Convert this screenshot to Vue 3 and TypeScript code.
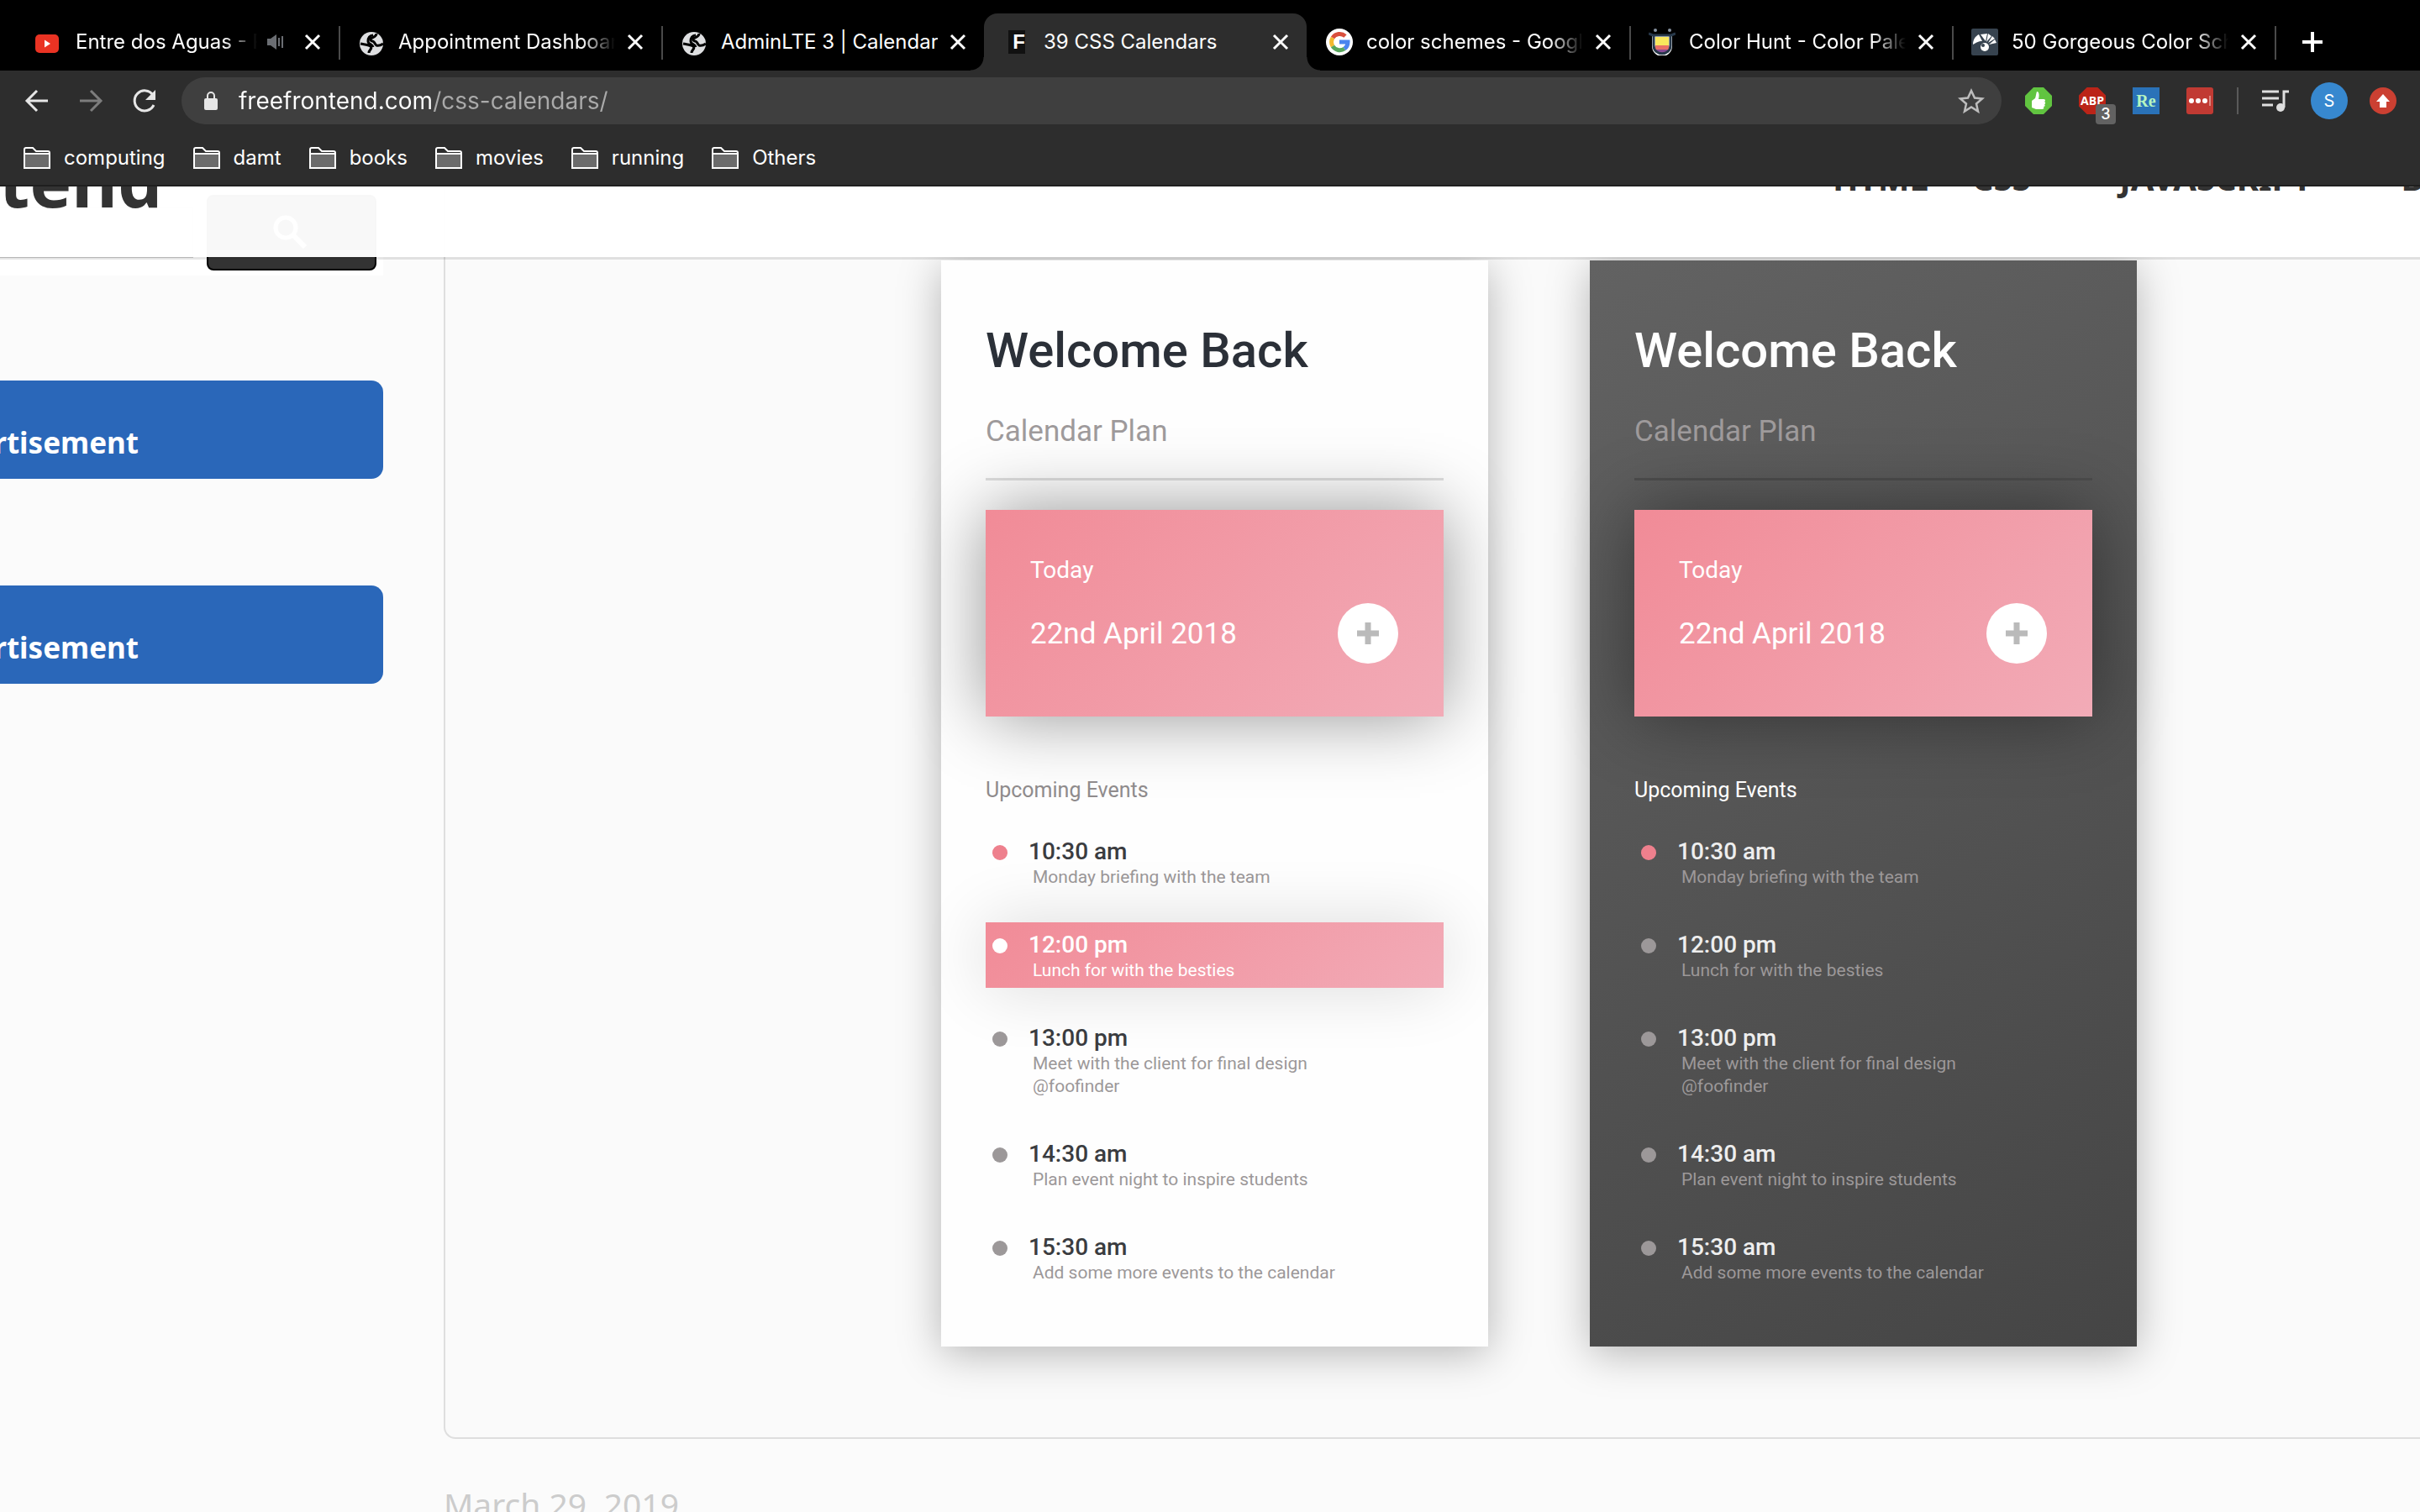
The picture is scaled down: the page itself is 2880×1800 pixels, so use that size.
<script setup lang="ts">
interface Tab {
  title: string
  icon: 'youtube' | 'globe' | 'letter' | 'google' | 'hunt' | 'canva'
  active?: boolean
  audio?: boolean
}

interface CalendarEvent {
  time: string
  text: string
}

const tabs: Tab[] = [
  { title: 'Entre dos Aguas - Paco de Lucia', icon: 'youtube', audio: true },
  { title: 'Appointment Dashboard', icon: 'globe' },
  { title: 'AdminLTE 3 | Calendar', icon: 'globe' },
  { title: '39 CSS Calendars', icon: 'letter', active: true },
  { title: 'color schemes - Google Search', icon: 'google' },
  { title: 'Color Hunt - Color Palettes', icon: 'hunt' },
  { title: '50 Gorgeous Color Schemes', icon: 'canva' },
]

const bookmarks: string[] = ['computing', 'damt', 'books', 'movies', 'running', 'Others']

const events: CalendarEvent[] = [
  { time: '10:30 am', text: 'Monday briefing with the team' },
  { time: '12:00 pm', text: 'Lunch for with the besties' },
  { time: '13:00 pm', text: 'Meet with the client for final design @foofinder' },
  { time: '14:30 am', text: 'Plan event night to inspire students' },
  { time: '15:30 am', text: 'Add some more events to the calendar' },
]

const themes: string[] = ['light', 'dark']
const address = 'freefrontend.com/css-calendars/'
</script>

<template>
  <div class="browser">
    <div class="tabs" role="tablist">
      <div v-for="tab in tabs" :key="tab.title" class="tab" :class="{ active: tab.active }" role="tab">
        <span class="favicon">
          <svg v-if="tab.icon === 'youtube'" viewBox="0 0 32 32">
            <rect x="0" y="7" width="28" height="22" rx="5" fill="#ea3323" />
            <path d="M11 13.500l7 4.500-7 4.500z" fill="#fff" />
          </svg>
          <svg v-else-if="tab.icon === 'globe'" viewBox="0 0 32 32">
            <circle cx="16" cy="18" r="14" fill="#dedfe1" />
            <path d="M22 6c0 3-3 4-5 5-3 1-3 3 0 4 3 0 3 4 5 5 3 1 5 0 8-2" fill="none" stroke="#000" stroke-width="3" />
            <path d="M18 8c-4 0-6 3-6 7s5 3 6 7M3 18c5 1 9 1 12 3 3 3-2 4-2 8" fill="none" stroke="#000" stroke-width="3" />
          </svg>
          <span v-else-if="tab.icon === 'letter'" class="letter">F</span>
          <svg v-else-if="tab.icon === 'google'" viewBox="0 0 32 32">
            <circle cx="16" cy="16" r="16" fill="#fff" />
            <g fill="none" stroke-width="5">
              <path d="M23 9a10 10 0 0 0-15 2" stroke="#d94f3d" />
              <path d="M8 11a10 10 0 0 0 0 10" stroke="#f2b92f" />
              <path d="M8 21a10 10 0 0 0 14 3" stroke="#57a65b" />
              <path d="M22 24c3-2 4-5 4-8h-10" stroke="#4b84ee" />
            </g>
          </svg>
          <svg v-else-if="tab.icon === 'hunt'" viewBox="0 0 32 32">
            <path d="M5 8h22v13a11 11 0 0 1-22 0z" fill="#fff" stroke="#fff" stroke-width="2" />
            <path d="M8 10h16v11H8z" fill="#f9e75c" />
            <path d="M8 20h16v6H8z" fill="#e96f67" />
            <path d="M9 25h14c-2 4-4 5-7 5s-5-1-7-5z" fill="#8a4a95" />
            <path d="M0 6l5 2h22l5-2M6 8v12c0 13 20 13 20 0V8" fill="none" stroke="#27384a" stroke-width="3" />
            <circle cx="8" cy="2" r="2" fill="#8894a2" />
            <circle cx="25" cy="2" r="2" fill="#8894a2" />
          </svg>
          <svg v-else viewBox="0 0 32 32">
            <rect width="32" height="32" rx="2" fill="#37434f" />
            <path d="M2 19c0-6 3-10 7-12l4 8c-5 0-7 2-11 4zM11 7l8-1-2 9zM20 6l4 3-6 7zM25 9l3 3-8 5zM28 13l2 4-9 2z" fill="#fff" />
            <circle cx="16" cy="22" r="5" fill="#fff" />
            <circle cx="14" cy="20" r="2" fill="#37434f" />
          </svg>
        </span>
        <span class="tab-title">{{ tab.title }}</span>
        <svg v-if="tab.audio" class="audio" viewBox="0 0 20 20">
          <path d="M0 6h4l7-5v18l-7-5H0z" fill="#6b6e73" />
          <path d="M14 5v10M18 3v14" stroke="#6b6e73" stroke-width="2" />
        </svg>
        <button class="close" type="button" aria-label="Close tab">
          <svg viewBox="0 0 20 20"><path d="M2 2l16 16M18 2L2 18" stroke="#fff" stroke-width="3" /></svg>
        </button>
      </div>
      <button class="new-tab" type="button" aria-label="New tab">
        <svg viewBox="0 0 24 24"><path d="M12 0v24M0 12h24" stroke="#fff" stroke-width="4" /></svg>
      </button>
    </div>

    <div class="toolbar">
      <button class="nav-button" type="button" aria-label="Back">
        <svg viewBox="0 0 32 32"><path d="M29 16H5M16 4L4 16l12 12" fill="none" stroke="#e6e6e6" stroke-width="3" /></svg>
      </button>
      <button class="nav-button" type="button" aria-label="Forward">
        <svg viewBox="0 0 32 32"><path d="M3 16h24M16 4l12 12-12 12" fill="none" stroke="#7d7d7d" stroke-width="3" /></svg>
      </button>
      <button class="nav-button" type="button" aria-label="Reload">
        <svg viewBox="0 0 32 32">
          <path d="M26 9a12 12 0 1 0 1 12" fill="none" stroke="#e6e6e6" stroke-width="3" />
          <path d="M29 3v12H17z" fill="#e6e6e6" />
        </svg>
      </button>
      <div class="omnibox">
        <svg class="lock" viewBox="0 0 18 24">
          <rect x="1" y="9" width="16" height="14" rx="2" fill="#e6e6e6" />
          <path d="M5 10V6a4 4 0 0 1 8 0v4" fill="none" stroke="#e6e6e6" stroke-width="2" />
        </svg>
        <input class="address" type="text" :value="address" aria-label="Address" />
        <button class="plain" type="button" aria-label="Bookmark this page">
          <svg class="icon" viewBox="0 0 32 32">
            <path d="M16 4l4 8.500 9 1-7 6 2 9-8-5-8 5 2-9-7-6 9-1z" fill="none" stroke="#bdbdbd" stroke-width="2.500" />
          </svg>
        </button>
      </div>
      <div class="extensions">
        <button class="plain" type="button" aria-label="Block ads">
          <svg class="icon" viewBox="0 0 32 32">
            <path d="M10 0h12l10 10v12L22 32H10L0 22V10z" fill="#61c440" />
            <path d="M14 5c3 0 3 5 2 9h6c3 0 2 3 1 3 2 1 1 3 0 3 1 1 1 3-1 3 1 2 0 3-2 3h-7l-5-2V16l4-3c1-3 1-5 2-8z" fill="#fff" />
          </svg>
        </button>
        <button class="plain abp" type="button"><span class="octagon">ABP</span><span class="badge">3</span></button>
        <button class="plain re" type="button">Re</button>
        <button class="plain" type="button" aria-label="Passwords">
          <svg class="icon" viewBox="0 0 32 32">
            <rect width="32" height="32" rx="3" fill="#c13a33" />
            <circle cx="6" cy="16" r="3" fill="#fff" />
            <circle cx="14" cy="16" r="3" fill="#fff" />
            <circle cx="22" cy="16" r="3" fill="#fff" />
            <path d="M28 10v12" stroke="#f3d5d2" stroke-width="1" />
          </svg>
        </button>
      </div>
      <span class="divider"></span>
      <button class="plain" type="button" aria-label="Media">
        <svg class="icon" viewBox="0 0 32 32">
          <path d="M0 5h20M0 13h20M0 21h13M26 24V5h6" fill="none" stroke="#dedede" stroke-width="3" />
          <circle cx="22" cy="24" r="5" fill="#dedede" />
        </svg>
      </button>
      <button class="plain avatar" type="button">S</button>
      <button class="plain" type="button" aria-label="Update">
        <svg class="icon" viewBox="0 0 32 32">
          <circle cx="16" cy="16" r="16" fill="#cb4032" />
          <path d="M16 8l8 9h-4v7h-8v-7H8z" fill="#fff" />
        </svg>
      </button>
    </div>

    <nav class="bookmarks" aria-label="Bookmarks">
      <a v-for="name in bookmarks" :key="name" href="#" class="bookmark">
        <svg class="icon" viewBox="0 0 32 32">
          <path d="M1 28V6a2 2 0 0 1 2-2h8l4 4h14a2 2 0 0 1 2 2v18z" fill="#2d2d2d" stroke="#fff" stroke-width="2" />
          <path d="M1 11h30v17H1z" fill="#6b6b6b" stroke="#fff" stroke-width="2" />
        </svg>
        {{ name }}
      </a>
    </nav>

    <div class="page">
      <header class="site-header">
        <a class="brand" href="#">Free Frontend</a>
        <nav class="menu">
          <a href="#">HTML</a>
          <a href="#">CSS <svg class="caret" viewBox="0 0 24 12"><path d="M6 1l6 6 6-6z" fill="#333" /></svg></a>
          <a href="#">JAVASCRIPT <svg class="caret" viewBox="0 0 24 12"><path d="M6 1l6 6 6-6z" fill="#333" /></svg></a>
          <a href="#">BOOTSTRAP</a>
        </nav>
      </header>

      <div class="columns">
        <aside class="sidebar">
          <form class="search" @submit.prevent>
            <input type="search" aria-label="Search" />
            <button type="submit" aria-label="Search">
              <svg viewBox="0 0 40 40">
                <circle cx="15" cy="15" r="12" fill="none" stroke="#fff" stroke-width="5" />
                <path d="M24 24l14 14" stroke="#fff" stroke-width="6" />
              </svg>
            </button>
          </form>
          <div class="ad"><strong>Advertisement</strong></div>
          <div class="ad"><strong>Advertisement</strong></div>
        </aside>

        <main>
          <div class="demo">
            <section v-for="theme in themes" :key="theme" class="planner" :class="theme">
              <h1>Welcome Back</h1>
              <p class="subtitle">Calendar Plan</p>
              <div class="today">
                <div>
                  <p class="today-label">Today</p>
                  <p class="today-date">22nd April 2018</p>
                </div>
                <button class="add" type="button" aria-label="Add event">
                  <svg viewBox="0 0 26 26"><path d="M13 0v26M0 13h26" stroke="#bababa" stroke-width="7" /></svg>
                </button>
              </div>
              <h2>Upcoming Events</h2>
              <ul>
                <li v-for="event in events" :key="event.time">
                  <span class="dot"></span>
                  <div>
                    <p class="time">{{ event.time }}</p>
                    <p class="text">{{ event.text }}</p>
                  </div>
                </li>
              </ul>
            </section>
          </div>
          <p class="date">March 29, 2019</p>
        </main>
      </div>
    </div>
  </div>
</template>

<style>
body {
  background: #fbfbfb;
}
</style>

<style scoped>
* {
  box-sizing: border-box;
  margin: 0;
  padding: 0;
}

button {
  border: 0;
  background: none;
  font: inherit;
  color: inherit;
}

a {
  color: inherit;
  text-decoration: none;
}

svg {
  display: block;
}

.browser {
  display: flex;
  flex-direction: column;
  height: 100vh;
  overflow: hidden;
  font: 24px/32px Inter, "Liberation Sans", sans-serif;
  color: #fff;
}

/* Tab strip */
.tabs {
  display: flex;
  height: 84px;
  padding: 16px 0 0 19px;
  background: #000;
}

.tab {
  position: relative;
  display: flex;
  align-items: center;
  flex: 0 1 384px;
  min-width: 0;
  height: 68px;
  padding: 0 21px 0 23px;
}

.tab::after {
  content: "";
  position: absolute;
  right: -2px;
  top: 15px;
  width: 2px;
  height: 40px;
  background: #4a4a4a;
}

.tab.active {
  border-radius: 16px 16px 0 0;
  background: #2d2d2d;
}

.tab.active::before,
.tab.active::after {
  content: "";
  position: absolute;
  top: auto;
  bottom: 0;
  width: 16px;
  height: 16px;
}

.tab.active::before {
  left: -16px;
  background: radial-gradient(circle at 0 0, #000 15px, #2d2d2d 16px);
}

.tab.active::after {
  right: -16px;
  background: radial-gradient(circle at 100% 0, #000 15px, #2d2d2d 16px);
}

.tab:has(+ .active)::after {
  display: none;
}

.favicon {
  flex: none;
  width: 32px;
  height: 32px;
  margin-right: 16px;
}

.letter {
  display: block;
  width: 20px;
  height: 28px;
  margin: 2px 6px;
  background: #111;
  font: bold 24px/28px "Liberation Sans", sans-serif;
  text-align: right;
}

.tab-title {
  flex: 1;
  overflow: hidden;
  white-space: nowrap;
  mask-image: linear-gradient(to left, transparent, #000 40px);
}

.audio {
  flex: none;
  width: 20px;
  height: 20px;
  margin-left: 12px;
}

.close {
  flex: none;
  width: 20px;
  height: 20px;
  margin-left: 14px;
}

.audio + .close {
  margin-left: 24px;
}

.tab.active .tab-title,
.tab:has(+ .active) .tab-title {
  mask-image: none;
}

.new-tab {
  width: 24px;
  margin-left: 33px;
}

/* Toolbar */
.toolbar {
  display: flex;
  align-items: center;
  height: 72px;
  padding: 0 28px;
  background: #2d2d2d;
}

.nav-button {
  width: 32px;
  height: 32px;
  margin-right: 32px;
}

.nav-button:nth-child(3) {
  margin-right: 28px;
}

.omnibox {
  display: flex;
  align-items: center;
  flex: 1;
  height: 56px;
  margin-right: 28px;
  padding: 0 20px 0 26px;
  border-radius: 28px;
  background: #3f3f3f;
}

.lock {
  width: 18px;
  height: 24px;
  margin-right: 24px;
}

.address {
  flex: 1;
  border: 0;
  outline: 0;
  background: linear-gradient(to right, #fff 231px, #aaa 231px);
  background-clip: text;
  color: transparent;
  font: 28px/40px Inter, "Liberation Sans", sans-serif;
}

.icon {
  width: 32px;
  height: 32px;
}

.extensions {
  display: flex;
  gap: 32px;
}

.abp {
  position: relative;
  width: 32px;
  height: 32px;
}

.octagon {
  display: flex;
  justify-content: center;
  height: 32px;
  background: #bb2418;
  clip-path: polygon(30% 0, 70% 0, 100% 30%, 100% 70%, 70% 100%, 30% 100%, 0 70%, 0 30%);
  font: bold 14px/32px "Open Sans", sans-serif;
}

.badge {
  position: absolute;
  left: 20px;
  top: 20px;
  width: 24px;
  height: 24px;
  border-radius: 4px;
  background: #626262;
  font: 500 18px/24px Inter, sans-serif;
}

.re {
  width: 32px;
  height: 32px;
  background: #2a72b8;
  color: #b6f5c0;
  font: bold 20px/32px "Liberation Serif", serif;
}

.divider {
  width: 2px;
  height: 32px;
  margin: 0 28px;
  background: #5a5a5a;
}

.avatar {
  width: 44px;
  height: 44px;
  margin: 0 26px;
  border-radius: 50%;
  background: #3788cf;
  font-size: 20px;
}

/* Bookmarks */
.bookmarks {
  display: flex;
  gap: 33px;
  height: 66px;
  padding: 16px 28px 0;
  border-bottom: 2px solid #1f1f1f;
  background: #2d2d2d;
}

.bookmark {
  display: flex;
  gap: 16px;
  height: 32px;
}

/* Web page */
.page {
  position: relative;
  flex: 1;
  overflow: hidden;
  background: #fbfbfb;
  color: #333;
  font-family: "Noto Sans", "Open Sans", sans-serif;
}

.site-header {
  position: absolute;
  z-index: 2;
  inset: 0 0 auto;
  display: flex;
  align-items: flex-start;
  justify-content: space-between;
  height: 87px;
  overflow: hidden;
  border-bottom: 3px solid rgba(0, 0, 0, 0.1);
  background: rgba(255, 255, 255, 0.97);
  background-clip: padding-box;
  font-weight: bold;
  white-space: nowrap;
}

.brand {
  display: flex;
  justify-content: flex-end;
  width: 193px;
  margin-top: -63px;
  font-size: 84px;
  line-height: 112px;
}

.menu {
  display: flex;
  gap: 52px;
  width: 699px;
  margin-top: -38px;
  font-size: 40px;
  line-height: 56px;
}

.menu a {
  display: flex;
  align-items: center;
  gap: 20px;
}

.caret {
  width: 24px;
  height: 12px;
  margin-right: 10px;
}

.columns {
  display: flex;
}

.sidebar {
  flex: none;
  width: 456px;
  margin-right: 72px;
}

.search {
  display: flex;
  align-items: flex-start;
  gap: 16px;
  height: 106px;
  margin-bottom: 125px;
  padding: 10px 8px 0 0;
  background: #fff;
}

.search input {
  flex: 1;
  min-width: 0;
  height: 61px;
  margin-top: 14px;
  border: 1px solid #ccc;
  border-left: 0;
  background: #fff;
  font-size: 32px;
}

.search button {
  display: flex;
  justify-content: center;
  flex: none;
  width: 202px;
  height: 90px;
  padding-top: 22px;
  padding-right: 4px;
  border: 2px solid #000;
  border-radius: 8px;
  background: #333;
}

.search svg {
  width: 40px;
  height: 40px;
}

.ad {
  height: 117px;
  margin-bottom: 127px;
  border-radius: 0 14px 14px 0;
  background: #2a67b9;
  color: #fff;
}

.ad strong {
  display: flex;
  justify-content: flex-end;
  width: 165px;
  padding-top: 49px;
  font-size: 35px;
  line-height: 50px;
}

main {
  flex: 1;
  min-width: 0;
}

.demo {
  display: flex;
  gap: 121px;
  height: 1491px;
  padding: 88px 0 0 590px;
  border: solid #dedede;
  border-width: 0 0 2px 2px;
  border-radius: 0 0 0 14px;
  background: #fafafa;
}

.date {
  margin-top: 48px;
  color: #ccc;
  font-size: 39px;
  line-height: 60px;
}

/* Planner */
.planner {
  flex: none;
  width: 651px;
  height: 1293px;
  padding: 71px 53px 0;
  background: #fefefe;
  box-shadow: 0 8px 48px rgba(0, 0, 0, 0.28);
  color: #3a3c40;
  font-family: Roboto, sans-serif;
}

.planner.dark {
  background: linear-gradient(150deg, #626262, #454545);
  color: #eee;
}

h1 {
  color: #2b3038;
  font-size: 58px;
  line-height: 72px;
  font-weight: 500;
}

.dark h1 {
  color: #fff;
}

.subtitle {
  padding: 40px 0 34px;
  border-bottom: 3px solid #dedede;
  color: #9e9a9b;
  font-size: 35px;
  line-height: 42px;
}

.dark .subtitle {
  border-color: #4d4d4d;
}

.today {
  display: flex;
  justify-content: space-between;
  height: 246px;
  margin-top: 35px;
  padding: 54px 54px 0 53px;
  background: linear-gradient(135deg, #f18b97, #f2abb7);
  box-shadow: 0 0 80px rgba(0, 0, 0, 0.42);
  color: #fff;
}

.today-label {
  font-size: 28px;
  line-height: 36px;
}

.today-date {
  margin-top: 37px;
  font-size: 35px;
  line-height: 42px;
}

.add {
  display: flex;
  align-items: center;
  justify-content: center;
  width: 72px;
  height: 72px;
  margin-top: 57px;
  border-radius: 50%;
  background: #fff;
}

.add svg {
  width: 26px;
  height: 26px;
}

h2 {
  margin-top: 70px;
  color: #8f8b8c;
  font-size: 25px;
  line-height: 36px;
  font-weight: 400;
}

.dark h2 {
  color: #fff;
}

ul {
  display: grid;
  gap: 33px;
  margin-top: 28px;
  list-style: none;
}

li {
  display: flex;
  padding: 10px 0 7px 8px;
}

.dot {
  flex: none;
  width: 18px;
  height: 18px;
  margin: 9px 25px 0 0;
  border-radius: 50%;
  background: #9c9899;
}

li:first-child .dot {
  background: #ee808d;
}

.time {
  font-size: 28px;
  line-height: 34px;
  font-weight: 500;
}

.text {
  width: 380px;
  padding-left: 5px;
  color: #9c9899;
  font-size: 21px;
  line-height: 27px;
}

.light li:nth-child(2) {
  background: linear-gradient(135deg, #f18b97, #f2abb7);
  box-shadow: 0 0 80px rgba(0, 0, 0, 0.14);
  color: #fff;
}

.light li:nth-child(2) .dot {
  background: #fff;
}

.light li:nth-child(2) .text {
  color: #fff;
}
</style>
